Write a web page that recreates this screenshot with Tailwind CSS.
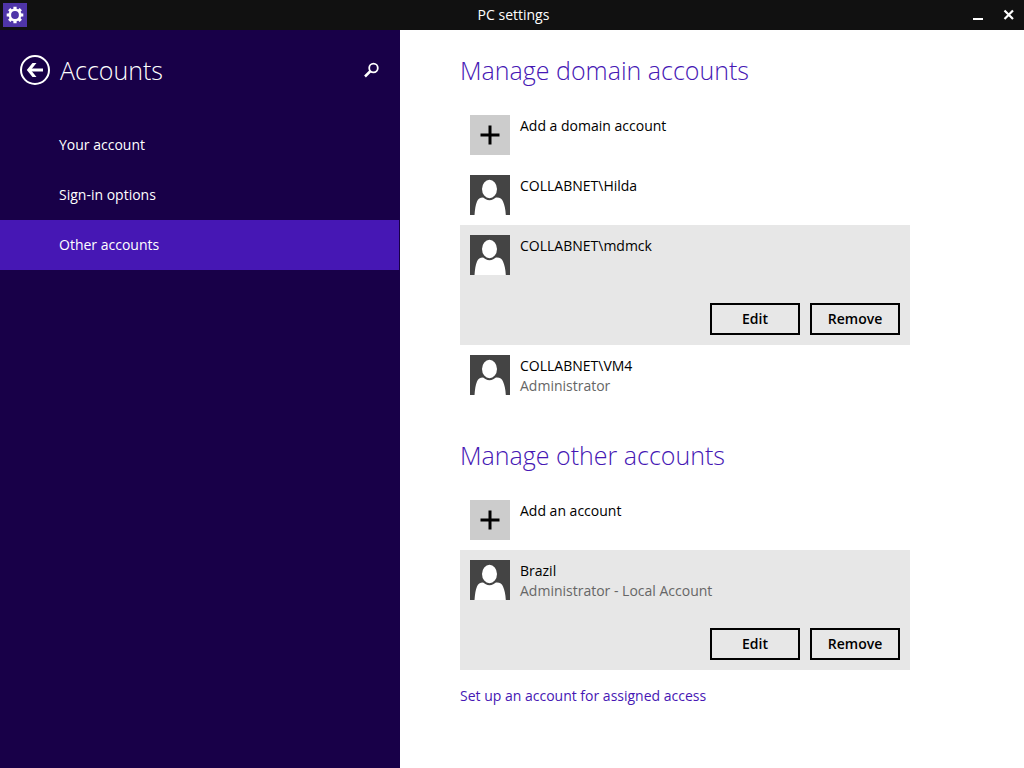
<!DOCTYPE html>
<html lang="en">
<head>
    <meta charset="UTF-8">
    <meta name="viewport" content="width=device-width, initial-scale=1.0">
    <title>PC settings</title>
    <script src="https://cdn.jsdelivr.net/npm/@tailwindcss/browser@4"></script>
</head>
<body class="min-h-screen flex flex-col bg-white text-black text-sm leading-5 font-['Open_Sans','Noto_Sans',sans-serif]">
    <!-- Shared icons -->
    <svg class="hidden">
        <symbol id="person" viewBox="0 0 40 40">
            <rect width="40" height="40" fill="#444444"/>
            <path d="M4.500 40C5 34 5.500 30 7 26.500C8 24 10 22.500 13 22.500H27C30 22.500 32 24 33 26.500C34.500 30 35.500 34 35.800 40Z" fill="#fff"/>
            <ellipse cx="19.500" cy="14" rx="8.500" ry="10.200" fill="#fff" stroke="#444444" stroke-width="2"/>
        </symbol>
        <symbol id="plus" viewBox="0 0 40 40">
            <path d="M20 10.500V29.500M10.500 20H29.500" stroke="#000" stroke-width="3"/>
        </symbol>
    </svg>

    <!-- Title bar -->
    <header class="h-[30px] shrink-0 flex items-center bg-[#111111] text-white">
        <div class="flex-1 pl-[3px]">
            <svg class="size-6 bg-[#4f35a8]" viewBox="0 0 24 24">
                <circle cx="12" cy="12" r="5.200" fill="none" stroke="#fff" stroke-width="2.600"/>
                <path d="M18 12H20.300M3.700 12H6M12 3.700V6M12 18V20.300M6.200 6.200L8 8M16 16L17.800 17.800M17.800 6.200L16 8M8 16L6.200 17.800" stroke="#fff" stroke-width="3.200"/>
            </svg>
        </div>
        <h1>PC settings</h1>
        <div class="flex-1 flex justify-end">
            <button type="button" aria-label="Minimize" class="w-[30px] h-[30px]">
                <svg class="size-full" viewBox="0 0 30 30"><path d="M9 19H19" stroke="#fff" stroke-width="2"/></svg>
            </button>
            <button type="button" aria-label="Close" class="w-[30px] h-[30px]">
                <svg class="size-full" viewBox="0 0 30 30"><path d="M10.500 10.500L19 19M19 10.500L10.500 19" stroke="#fff" stroke-width="2.200"/></svg>
            </button>
        </div>
    </header>

    <div class="flex-1 flex">
        <!-- Sidebar -->
        <aside class="w-[400px] shrink-0 bg-[#180048] text-white">
            <div class="h-20 pl-5 pr-5 flex items-center">
                <button type="button" aria-label="Back" class="size-[30px] mr-[10px]">
                    <svg class="size-full" viewBox="0 0 30 30" fill="none" stroke="#fff">
                        <circle cx="15" cy="15" r="14" stroke-width="2"/>
                        <path d="M9 15H23" stroke-width="3"/>
                        <path d="M16.500 8H12.500L6.800 15L12.500 22H16.500L10.800 15Z" fill="#fff" stroke="none"/>
                    </svg>
                </button>
                <h2 class="flex-1 text-[25px] font-light">Accounts</h2>
                <button type="button" aria-label="Search" class="size-4">
                    <svg class="size-full" viewBox="0 0 16 16" fill="none" stroke="#fff">
                        <circle cx="9.500" cy="6" r="4.300" stroke-width="1.800"/>
                        <path d="M6.500 9L1 14.500" stroke-width="2.500"/>
                    </svg>
                </button>
            </div>
            <nav class="pt-[10px] pr-px">
                <a href="#" class="flex items-center h-[50px] pl-[59px]">Your account</a>
                <a href="#" class="flex items-center h-[50px] pl-[59px]">Sign-in options</a>
                <a href="#" aria-current="page" class="flex items-center h-[50px] pl-[59px] bg-[#4617b4]">Other accounts</a>
            </nav>
        </aside>

        <!-- Account lists -->
        <main class="flex-1 pl-[60px] pr-5">
            <div class="max-w-[450px]">
                <section>
                    <h2 class="h-[75px] pt-[5px] flex items-center text-[25px] font-light text-[#4617b4]">Manage domain accounts</h2>
                    <button type="button" class="w-full flex gap-[10px] p-[10px] text-left">
                        <svg class="size-10 bg-[#cccccc]"><use href="#plus"/></svg>
                        <span class="pt-px">Add a domain account</span>
                    </button>
                    <ul>
                        <li class="flex gap-[10px] p-[10px]">
                            <svg class="size-10"><use href="#person"/></svg>
                            <p class="pt-px">COLLABNET\Hilda</p>
                        </li>
                        <li class="p-[10px] bg-[#e7e7e7]">
                            <div class="flex gap-[10px]">
                                <svg class="size-10"><use href="#person"/></svg>
                                <p class="pt-px">COLLABNET\mdmck</p>
                            </div>
                            <div class="flex justify-end gap-[10px] mt-7 font-semibold">
                                <button type="button" class="w-[90px] h-8 border-2 border-black">Edit</button>
                                <button type="button" class="w-[90px] h-8 border-2 border-black">Remove</button>
                            </div>
                        </li>
                        <li class="flex gap-[10px] p-[10px]">
                            <svg class="size-10"><use href="#person"/></svg>
                            <div class="h-10 pt-px">
                                <p>COLLABNET\VM4</p>
                                <p class="text-[#666666]">Administrator</p>
                            </div>
                        </li>
                    </ul>
                </section>

                <section class="mt-[10px]">
                    <h2 class="h-[75px] pt-[5px] flex items-center text-[25px] font-light text-[#4617b4]">Manage other accounts</h2>
                    <button type="button" class="w-full flex gap-[10px] p-[10px] text-left">
                        <svg class="size-10 bg-[#cccccc]"><use href="#plus"/></svg>
                        <span class="pt-px">Add an account</span>
                    </button>
                    <ul>
                        <li class="p-[10px] bg-[#e7e7e7]">
                            <div class="flex gap-[10px]">
                                <svg class="size-10"><use href="#person"/></svg>
                                <div class="h-10 pt-px">
                                    <p>Brazil</p>
                                    <p class="text-[#666666]">Administrator - Local Account</p>
                                </div>
                            </div>
                            <div class="flex justify-end gap-[10px] mt-7 font-semibold">
                                <button type="button" class="w-[90px] h-8 border-2 border-black">Edit</button>
                                <button type="button" class="w-[90px] h-8 border-2 border-black">Remove</button>
                            </div>
                        </li>
                    </ul>
                    <a href="#" class="inline-block mt-4 text-[#4617b4]">Set up an account for assigned access</a>
                </section>
            </div>
        </main>
    </div>
</body>
</html>
